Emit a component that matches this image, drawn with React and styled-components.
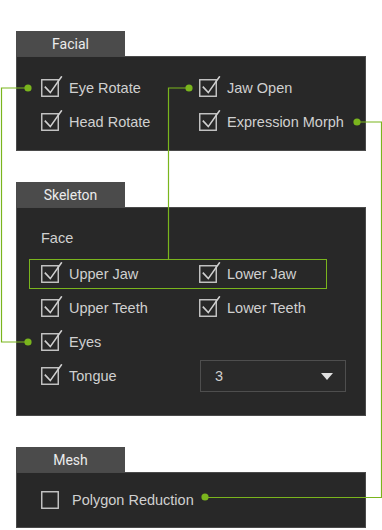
import React from 'react';
import styled, { createGlobalStyle } from 'styled-components';

const GREEN = '#7ab51d';

const GlobalStyle = createGlobalStyle`
  html, body {
    margin: 0;
    padding: 0;
    background: #ffffff;
    font-family: "Liberation Sans", Arial, sans-serif;
  }
`;

const Page = styled.div`
  position: relative;
  width: 382px;
  height: 530px;
  box-sizing: border-box;
  padding: 31px 0 0 16px;
  display: flex;
  flex-direction: column;
  gap: 31px;
`;

const Section = styled.section`
  width: 350px;
  display: flex;
  flex-direction: column;
`;

const Tab = styled.div`
  width: 109px;
  height: 25px;
  background: #4b4b4b;
  color: #ececec;
  font-family: Roboto, "Liberation Sans", sans-serif;
  font-size: 14px;
  line-height: 26px;
  text-align: center;
`;

const Panel = styled.div`
  background: #282828;
  border: 1px solid #4a4a4a;
  padding: ${p => p.$pad};
`;

const Grid = styled.div`
  display: grid;
  grid-template-columns: 158px 1fr;
  grid-auto-rows: 34px;
  align-items: center;
`;

const Label = styled.div`
  color: #d0d0d0;
  font-size: 14.5px;
  line-height: 20px;
  margin-bottom: 9px;
`;

const HighlightRow = styled.div`
  grid-column: 1 / span 2;
  display: grid;
  grid-template-columns: 158px 1fr;
  align-items: center;
  height: 28px;
  width: 285px;
  margin-left: -12px;
  padding-left: 11px;
  border: 1px solid ${GREEN};
`;

const Item = styled.label`
  display: flex;
  align-items: center;
  gap: ${p => (p.$checked ? 5 : 8)}px;
  color: #d0d0d0;
  font-size: 14.5px;
  white-space: nowrap;
`;

const Box = styled.svg`
  flex: none;
  display: block;
  margin-top: -4px;
`;

const Select = styled.div`
  display: flex;
  align-items: center;
  justify-content: space-between;
  box-sizing: border-box;
  width: 146px;
  height: 32px;
  margin-left: 1px;
  padding: 0 12px 0 14px;
  background: #2a2a2a;
  border: 1px solid #4e4e4e;
  color: #d0d0d0;
  font-size: 14.5px;
`;

const Arrow = styled.span`
  width: 0;
  height: 0;
  border-left: 6px solid transparent;
  border-right: 6px solid transparent;
  border-top: 7px solid #e0e0e0;
`;

const Overlay = styled.svg`
  position: absolute;
  left: 0;
  top: 0;
  pointer-events: none;
`;

function Check({ checked = true }) {
  return (
    <Box width="23" height="21" viewBox="0 0 23 21">
      <rect x="0.75" y="3.75" width="16.5" height="16.5" fill="none" stroke="#c9c9c9" strokeWidth="1.4" />
      {checked && (
        <path d="M3.8 10.6 L9.3 16.6 L20.8 0.3" fill="none" stroke="#d0d0d0" strokeWidth="1.6" />
      )}
    </Box>
  );
}

function Option({ children, checked = true }) {
  return (
    <Item $checked={checked}>
      <Check checked={checked} />
      {children}
    </Item>
  );
}

function Connectors() {
  const dots = [
    [28, 88],
    [28, 342],
    [189, 88],
    [357, 122],
    [205, 497]
  ];
  return (
    <Overlay width="382" height="530">
      <g fill="none" stroke={GREEN} strokeWidth="1.2">
        <path d="M28 88 H1.5 V342 H28" />
        <path d="M189 88 H168.5 V259" />
        <path d="M357 122 H381.5 V497.5 H205" />
      </g>
      {dots.map(([x, y]) => (
        <circle key={`${x}-${y}`} cx={x} cy={y} r="3.6" fill={GREEN} />
      ))}
    </Overlay>
  );
}

export default function App() {
  return (
    <>
      <GlobalStyle />
      <Page>
        <Section>
          <Tab>Facial</Tab>
          <Panel $pad="14px 0 11px 24px">
            <Grid>
              <Option>Eye Rotate</Option>
              <Option>Jaw Open</Option>
              <Option>Head Rotate</Option>
              <Option>Expression Morph</Option>
            </Grid>
          </Panel>
        </Section>

        <Section>
          <Tab>Skeleton</Tab>
          <Panel $pad="20px 0 22px 24px">
            <Label>Face</Label>
            <Grid>
              <HighlightRow>
                <Option>Upper Jaw</Option>
                <Option>Lower Jaw</Option>
              </HighlightRow>
              <Option>Upper Teeth</Option>
              <Option>Lower Teeth</Option>
              <Option>Eyes</Option>
              <div />
              <Option>Tongue</Option>
              <Select>
                <span>3</span>
                <Arrow />
              </Select>
            </Grid>
          </Panel>
        </Section>

        <Section>
          <Tab>Mesh</Tab>
          <Panel $pad="10px 0 10px 24px">
            <Grid>
              <Option checked={false}>Polygon Reduction</Option>
            </Grid>
          </Panel>
        </Section>
        <Connectors />
      </Page>
    </>
  );
}
